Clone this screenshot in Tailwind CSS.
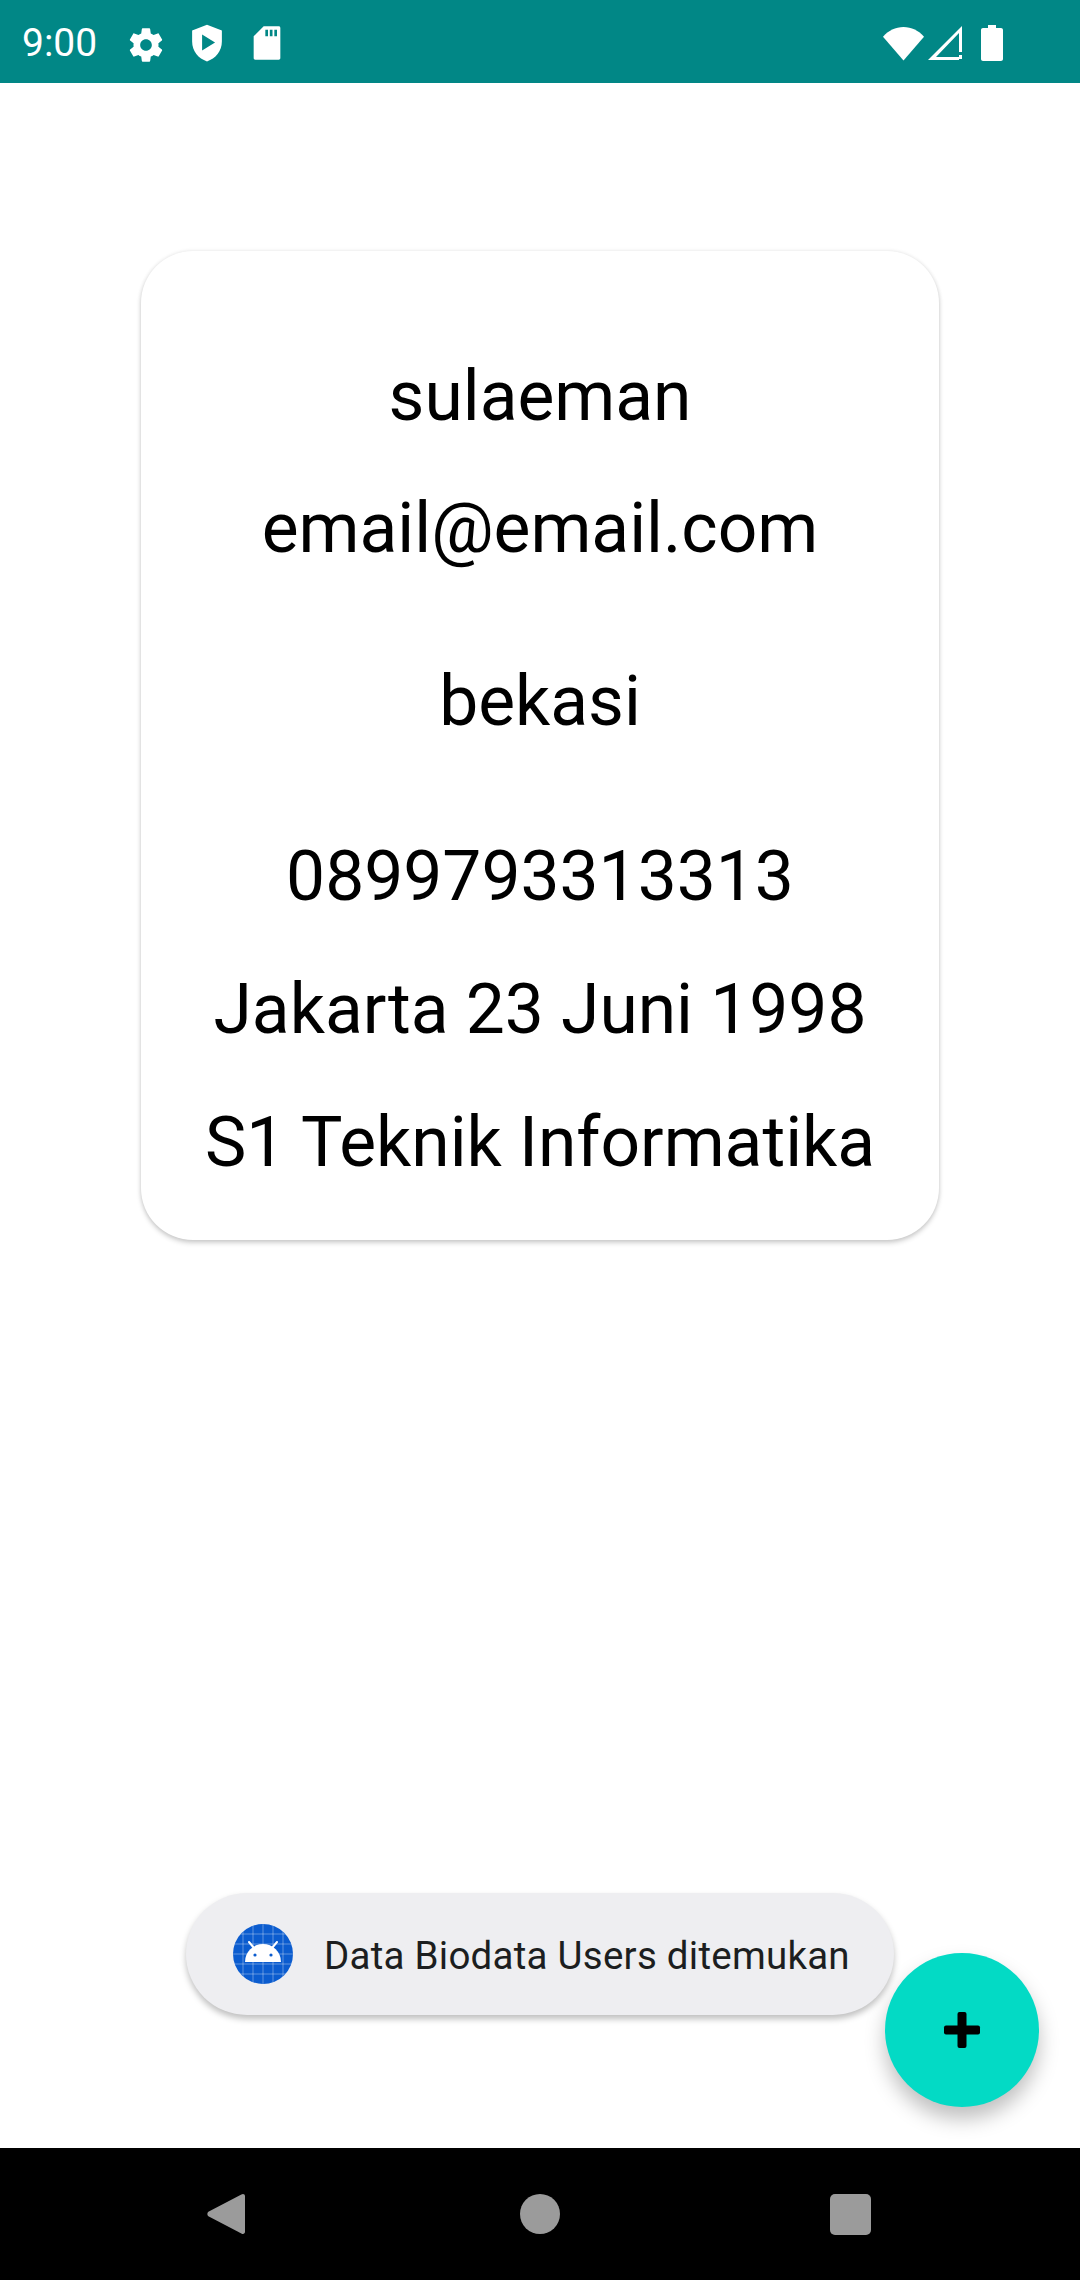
<!DOCTYPE html>
<html lang="en">
<head>
  <meta charset="UTF-8" />
  <title>Biodata</title>
  <script src="https://cdn.jsdelivr.net/npm/@tailwindcss/browser@4"></script>
</head>
<body class="bg-white font-['Roboto',sans-serif]">
  <div class="relative w-[1080px] h-[2280px] flex flex-col overflow-hidden">

    <!-- Status bar -->
    <header class="h-[83px] bg-[#018786] flex items-center justify-between text-white">
      <div class="flex items-center">
        <span class="ml-[22px] text-[39px] leading-none w-[104px] pt-[4px]">9:00</span>
        <svg class="w-[40px] h-[40px] mt-[6px]" viewBox="0 0 24 24" fill="#fff"><path d="M19.43 12.98c.04-.32.07-.64.07-.98s-.03-.66-.07-.98l2.11-1.65c.19-.15.24-.42.12-.64l-2-3.46c-.12-.22-.39-.3-.61-.22l-2.49 1c-.52-.4-1.08-.73-1.69-.98l-.38-2.65C14.46 2.18 14.25 2 14 2h-4c-.25 0-.46.18-.49.42l-.38 2.65c-.61.25-1.17.59-1.69.98l-2.49-1c-.23-.09-.49 0-.61.22l-2 3.46c-.13.22-.07.49.12.64l2.11 1.65c-.04.32-.07.65-.07.98s.03.66.07.98l-2.11 1.65c-.19.15-.24.42-.12.64l2 3.46c.12.22.39.3.61.22l2.49-1c.52.4 1.08.73 1.69.98l.38 2.65c.03.24.24.42.49.42h4c.25 0 .46-.18.49-.42l.38-2.65c.61-.25 1.17-.59 1.69-.98l2.49 1c.23.09.49 0 .61-.22l2-3.46c.12-.22.07-.49-.12-.64l-2.11-1.65zM12 15.5c-1.93 0-3.5-1.57-3.5-3.5s1.57-3.5 3.5-3.5 3.5 1.57 3.5 3.5-1.57 3.5-3.5 3.5z"/></svg>
        <svg class="w-[42px] h-[42px] ml-[20px] mt-[3px]" viewBox="0 0 24 24" fill="#fff"><path fill-rule="evenodd" d="M12 1.500 3.500 4.800v6.400c0 5.300 3.600 9.900 8.500 11.300 4.900-1.400 8.500-6 8.500-11.300V4.800L12 1.500zM9.200 7.200v9.100l7.400-4.550-7.400-4.550z"/></svg>
        <svg class="w-[40px] h-[40px] ml-[19px] mt-[3px]" viewBox="0 0 24 24" fill="#fff"><path fill-rule="evenodd" d="M10 2 4 8v13c0 .6.400 1 1 1h14c.6 0 1-.4 1-1V3c0-.6-.4-1-1-1h-9zm1 2h1.600v4H11V4zm2.700 0h1.600v4h-1.600V4zm2.700 0H18v4h-1.600V4z"/></svg>
      </div>
      <div class="flex items-center mr-[77px] mt-[2px]">
        <svg class="w-[41px] h-[36px]" viewBox="0 0 42 36" fill="#fff"><path d="M0 11.500C5.500 5 12.800 1.500 21 1.500S36.500 5 42 11.500L21 36 0 11.500z"/></svg>
        <svg class="w-[34px] h-[36px] ml-[4px]" viewBox="0 0 34 36" fill="#fff"><path fill-rule="evenodd" d="M34 1v21h-3V8L8 32h23v3H0L34 1z"/><path d="M31 13h3v14h-3zM31 30h3v4h-3z"/></svg>
        <svg class="w-[22px] h-[36px] ml-[19px]" viewBox="0 0 22 36" fill="#fff"><path d="M7 0h8v3h5c1.100 0 2 .9 2 2v29c0 1.100-.9 2-2 2H2c-1.100 0-2-.9-2-2V5c0-1.100.9-2 2-2h5V0z"/></svg>
      </div>
    </header>

    <!-- Biodata card -->
    <main class="flex-1 pt-[168px]">
      <section class="mx-auto w-[798px] h-[989px] rounded-[52px] bg-white shadow-[0_3px_5px_rgba(0,0,0,0.18),0_0_4px_rgba(0,0,0,0.09)] flex flex-col items-center text-black text-[69.5px] leading-[78px] pt-[107px]">
        <p>sulaeman</p>
        <p class="mt-[54px]">email@email.com</p>
        <p class="mt-[95px]">bekasi</p>
        <p class="mt-[97px]">0899793313313</p>
        <p class="mt-[55px]">Jakarta 23 Juni 1998</p>
        <p class="mt-[55px]">S1 Teknik Informatika</p>
      </section>
    </main>

    <!-- Navigation bar -->
    <nav class="h-[132px] bg-black flex items-center">
      <svg class="w-[38px] h-[46px] ml-[207px]" viewBox="0 0 42 46" fill="#9b9b9b"><path d="M38 1.500c1.800-1.400 4-.4 4 1.800v39.400c0 2.200-2.200 3.200-4 1.800L1.500 25.500c-1.500-1.200-1.500-3.800 0-5L38 1.500z"/></svg>
      <div class="w-[40px] h-[40px] rounded-full bg-[#9b9b9b] ml-[275px]"></div>
      <div class="w-[41px] h-[41px] rounded-[5px] bg-[#9b9b9b] ml-[270px]"></div>
    </nav>

    <!-- Toast -->
    <div class="absolute left-[186px] top-[1893px] w-[708px] h-[122px] rounded-full bg-[#eeeef1] shadow-[0_4px_6px_rgba(0,0,0,0.25)] flex items-center pl-[47px]">
      <svg class="w-[60px] h-[60px] shrink-0" viewBox="0 0 60 60">
        <circle cx="30" cy="30" r="30" fill="#0b5ccf"/>
        <path d="M10 0v60M20 0v60M30 0v60M40 0v60M50 0v60M0 10h60M0 20h60M0 30h60M0 40h60M0 50h60" stroke="#fff" stroke-opacity=".35" stroke-width="1" clip-path="circle(30px)"/>
        <path d="M16 18l5 6M44 18l-5 6" stroke="#fff" stroke-width="2" stroke-linecap="round"/>
        <path d="M12 38a18 18 0 0 1 36 0z" fill="#fff"/>
        <circle cx="22" cy="31" r="1.600" fill="#0b5ccf"/><circle cx="38" cy="31" r="1.600" fill="#0b5ccf"/>
      </svg>
      <span class="ml-[31px] pt-[5px] text-[38.5px] tracking-[0.25px] leading-none text-[#1c1e20] whitespace-nowrap">Data Biodata Users ditemukan</span>
    </div>

    <!-- Add button -->
    <button class="absolute left-[885px] top-[1953px] w-[154px] h-[154px] rounded-full bg-[#03dac5] shadow-[0_12px_20px_rgba(0,0,0,0.25)] flex items-center justify-center">
      <svg class="w-[38px] h-[38px]" viewBox="0 0 38 38" fill="#000"><rect x="14.500" y="1" width="9" height="36" rx="2"/><rect x="1" y="14.500" width="36" height="9" rx="2"/></svg>
    </button>
  </div>
</body>
</html>
